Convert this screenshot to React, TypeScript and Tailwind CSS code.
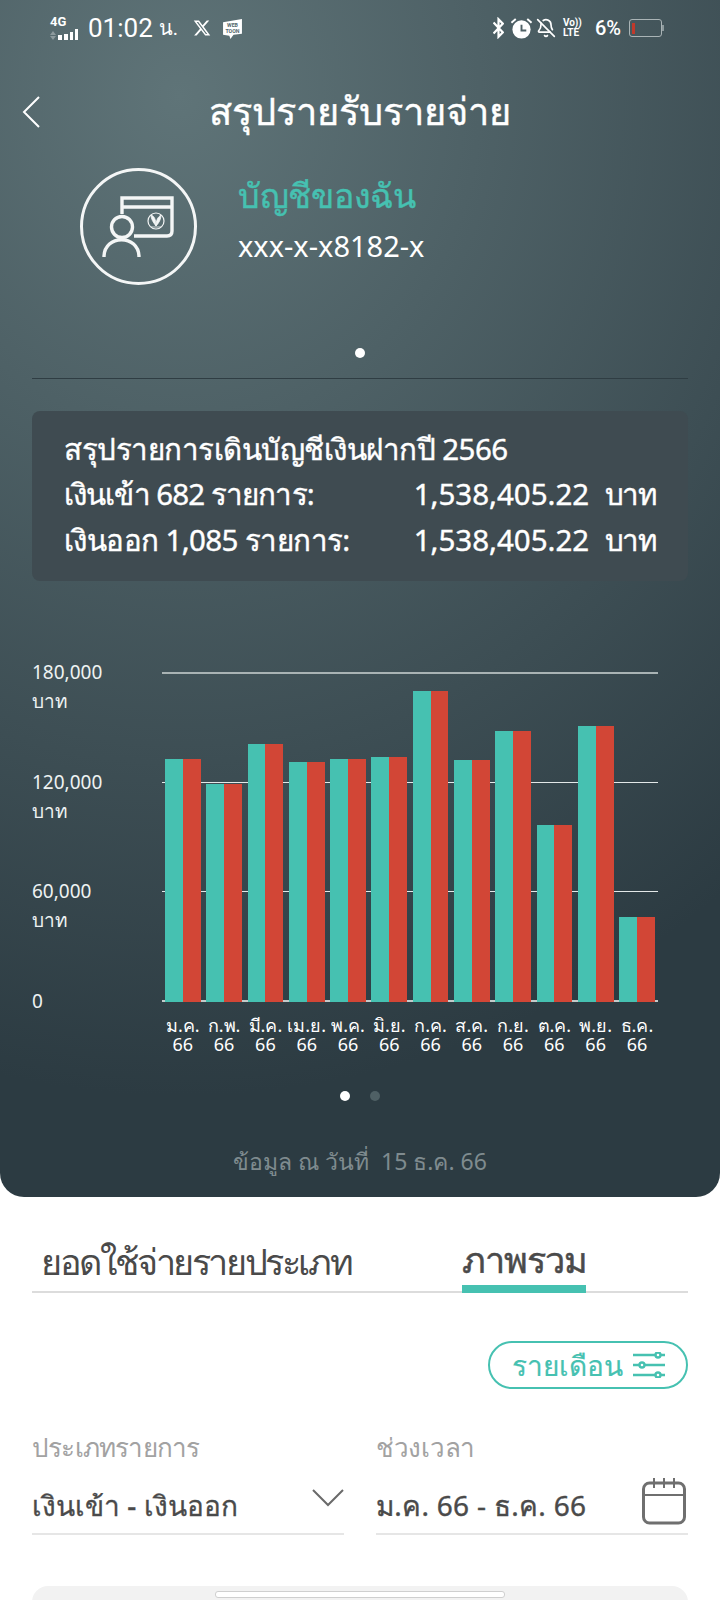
import { BellOff } from "lucide-react";
import { RiTwitterXFill } from "react-icons/ri";

const months = ["ม.ค.", "ก.พ.", "มี.ค.", "เม.ย.", "พ.ค.", "มิ.ย.", "ก.ค.", "ส.ค.", "ก.ย.", "ต.ค.", "พ.ย.", "ธ.ค."];
const bars = [243, 218, 258, 240, 243, 245, 311, 242, 271, 177, 276, 85];
const axis = ["180,000", "120,000", "60,000"];

function StatusBar() {
  return (
    <div className="flex h-[56px] items-center justify-between pl-[50px] pr-[56px] font-['Roboto',sans-serif] text-white">
      <div className="flex items-center">
        <div className="flex w-[32px] flex-col">
          <div className="flex items-start">
            <span className="text-[13px] font-bold leading-[12px]">4G</span>
          </div>
          <div className="mt-[1px] flex items-end gap-[2px]">
            <div className="mr-[1px] flex h-[9px] w-[5px] flex-col justify-between">
              <div className="h-0 w-0 border-x-[3px] border-b-[4px] border-x-transparent border-b-[#8d9a9d]" />
              <div className="h-0 w-0 border-x-[3px] border-t-[4px] border-x-transparent border-t-[#8d9a9d]" />
            </div>
            <div className="h-[5px] w-[4px] bg-white" />
            <div className="h-[6px] w-[4px] bg-white" />
            <div className="h-[8px] w-[3px] bg-white" />
            <div className="h-[11px] w-[3px] bg-white" />
          </div>
        </div>
        <span className="ml-[6px] text-[26px] font-normal leading-none">01:02</span>
        <span className="ml-[6px] text-[20px] font-normal leading-none">น.</span>
        <RiTwitterXFill className="ml-[14px] h-[20px] w-[20px]" />
        <svg viewBox="0 0 20 20" className="ml-[10px] h-[21px] w-[21px]">
          <path d="M1 4 L19 1 V15 L11 16 L8 20 L7 17 L1 16 Z" fill="#fff" />
          <text x="10" y="9" fontSize="5" fontWeight="700" textAnchor="middle" fill="#55686d">WEB</text>
          <text x="10" y="14" fontSize="5" fontWeight="700" textAnchor="middle" fill="#55686d">TOON</text>
        </svg>
      </div>
      <div className="flex items-center">
        <svg viewBox="0 0 10 20" fill="none" stroke="#fff" strokeWidth="2" className="h-[22px] w-[11px]">
          <path d="M0.5 5 9 14 5 18V2L9 6 0.5 15" />
        </svg>
        <svg viewBox="0 0 24 24" className="ml-[6px] h-[23px] w-[23px]">
          <circle cx="12" cy="13" r="9.5" fill="#fff" />
          <path d="M12 8v6h5" fill="none" stroke="#4f6166" strokeWidth="2" />
          <path d="M1.5 6 6 2M22.5 6 18 2" stroke="#fff" strokeWidth="2" />
        </svg>
        <BellOff className="ml-[3px] h-[20px] w-[20px]" strokeWidth={2} />
        <div className="ml-[7px] flex w-[20px] flex-col text-[10px] font-bold leading-[10px]">
          <span>Vo))</span>
          <span>LTE</span>
        </div>
        <span className="ml-[12px] text-[20px] font-medium leading-none">6%</span>
        <div className="ml-[8px] flex items-center">
          <div className="flex h-[18px] w-[33px] items-center rounded-[3px] border border-[#aab4b6] px-[2px]">
            <div className="h-[11px] w-[3px] bg-[#c0392b]" />
          </div>
          <div className="h-[6px] w-[2px] bg-[#8d9a9d]" />
        </div>
      </div>
    </div>
  );
}

function AccountIcon() {
  return (
    <svg viewBox="0 0 117 117" fill="none" stroke="#f4f6f6" className="h-[117px] w-[117px] shrink-0">
      <circle cx="58.5" cy="58.5" r="57" strokeWidth="3" />
      <path d="M42 46V30H92V63Q92 68 87 68H54M42 39H92" strokeWidth="3.4" />
      <circle cx="42" cy="59" r="10.5" strokeWidth="3.4" />
      <path d="M24 89C24 66 59 66 59 89" strokeWidth="3.4" />
      <circle cx="76" cy="53" r="8" strokeWidth="1.2" />
      <path d="M76 58C73 54 71 51 71 47C74 48 76 51 76 58C76 52 78 49 81 47C81 51 79 55 76 58ZM71 59H81" fill="#f4f6f6" strokeWidth="0.8" />
    </svg>
  );
}

function Chart() {
  return (
    <div className="mt-[91px] flex pl-[32px] pr-[30px]">
      <div className="mt-[-14px] w-[130px] text-[19px] text-[#eef2f2]">
        {axis.map((v) => (
          <div key={v} className="h-[109.5px] leading-[29px]">
            <div>{v}</div>
            <div>บาท</div>
          </div>
        ))}
        <div className="leading-[29px]">0</div>
      </div>
      <div className="w-[496px]">
        <div className="relative h-[330px]">
          <div className="absolute inset-0 flex flex-col justify-between">
            <div className="h-[2px] bg-[#a9b3b4]" />
            <div className="h-[1px] bg-[#e3e8e8]" />
            <div className="h-[1px] bg-[#e3e8e8]" />
            <div className="h-[2px] bg-[#c3caca]" />
          </div>
          <div className="absolute inset-0 flex items-end gap-[5.6px] pl-[3px]">
            {bars.map((h, i) => (
              <div key={i} className="flex w-[35.7px]">
                <div className="flex-1 bg-[#46c1b1]" style={{ height: h }} />
                <div className="flex-1 bg-[#d24636]" style={{ height: h }} />
              </div>
            ))}
          </div>
        </div>
        <div className="mt-[14px] flex gap-[5.6px] pl-[3px] text-center text-[18px] leading-[19px] text-white">
          {months.map((m) => (
            <div key={m} className="flex w-[35.7px] flex-col items-center whitespace-nowrap">
              <span>{m}</span>
              <span>66</span>
            </div>
          ))}
        </div>
      </div>
    </div>
  );
}

export default function App() {
  return (
    <div className="h-[1600px] w-[720px] overflow-hidden bg-white font-['Noto_Sans','DejaVu_Sans',sans-serif]">
      {/* Top panel */}
      <div className="h-[1197px] rounded-b-[24px] bg-[radial-gradient(ellipse_900px_1000px_at_25%_8%,#5f7478,#2c3b42)] text-white">
        <StatusBar />
        <div className="relative mt-[28px] flex h-[56px] items-center justify-center text-[38px] [-webkit-text-stroke:0.4px]">
          <svg viewBox="0 0 18 32" fill="none" stroke="#fff" strokeWidth="2" className="absolute left-[22px] h-[32px] w-[18px]">
            <path d="M17 1 2 16 17 31" />
          </svg>
          <span className="pb-[4px]">สรุปรายรับรายจ่าย</span>
        </div>
        <div className="mt-[28px] flex pl-[80px]">
          <AccountIcon />
          <div className="ml-[41px] mt-[4px]">
            <div className="text-[34px] leading-[46px] tracking-[-0.3px] text-[#46c1b1] [-webkit-text-stroke:0.4px]">บัญชีของฉัน</div>
            <div className="mt-[8px] text-[29px] leading-[40px]">xxx-x-x8182-x</div>
          </div>
        </div>
        <div className="mt-[63px] flex justify-center">
          <div className="h-[10px] w-[10px] rounded-full bg-white" />
        </div>
        <div className="mx-[32px] mt-[20px] h-[1px] bg-[#2f3d43]" />
        <div className="mx-[32px] mt-[32px] flex h-[170px] flex-col justify-center rounded-[8px] bg-[#3f4b51] px-[32px] pb-[4px] text-[29.5px] leading-[45.5px] [-webkit-text-stroke:0.4px]">
          <div className="tracking-[-0.5px]">สรุปรายการเดินบัญชีเงินฝากปี 2566</div>
          <div className="flex justify-between">
            <span className="tracking-[-0.9px]">เงินเข้า 682 รายการ:</span>
            <span>
              1,538,405.22&nbsp; <span className="tracking-[-1.2px]">บาท</span>
            </span>
          </div>
          <div className="flex justify-between">
            <span className="tracking-[-0.6px]">เงินออก 1,085 รายการ:</span>
            <span>
              1,538,405.22&nbsp; <span className="tracking-[-1.2px]">บาท</span>
            </span>
          </div>
        </div>
        <Chart />
        <div className="mt-[37px] flex justify-center gap-[20px]">
          <div className="h-[10px] w-[10px] rounded-full bg-white" />
          <div className="h-[10px] w-[10px] rounded-full bg-[#4f6065]" />
        </div>
        <div className="mt-[42px] text-center text-[23px] leading-[36px] text-[#7f8b8f]">ข้อมูล ณ วันที่&nbsp; 15 ธ.ค. 66</div>
      </div>

      {/* Tabs */}
      <div className="mx-[32px] mt-[39px] flex h-[57px] items-end border-b-2 border-[#dcdcdc] text-[36px] leading-[50px] text-[#4a4a4a]">
        <div className="ml-[9px] w-[309px] whitespace-nowrap pb-[4px] tracking-[-2.4px]">ยอดใช้จ่ายรายประเภท</div>
        <div className="mb-[-2px] ml-[112px] w-[124px] whitespace-nowrap border-b-8 border-[#46c1b1] tracking-[-1px] [-webkit-text-stroke:0.5px]">ภาพรวม</div>
      </div>

      {/* Filters */}
      <div className="mx-[32px] mt-[48px] flex justify-end">
        <div className="flex h-[48px] w-[200px] items-center justify-center gap-[10px] rounded-full border-2 border-[#46c1b1] text-[28px] text-[#46c1b1] [-webkit-text-stroke:0.2px]">
          รายเดือน
          <svg viewBox="0 0 32 26" fill="none" stroke="#46c1b1" strokeWidth="2.4" className="h-[26px] w-[32px]">
            <path d="M0 3H22M28 3H32M0 13H6M12 13H32M0 23H22M28 23H32" />
            <circle cx="25" cy="3" r="2.5" />
            <circle cx="9" cy="13" r="2.5" />
            <circle cx="25" cy="23" r="2.5" />
          </svg>
        </div>
      </div>
      <div className="mx-[32px] mt-[38px] grid grid-cols-2 gap-[32px]">
        <div>
          <div className="text-[26px] leading-[40px] tracking-[-0.8px] text-[#a2a2a2]">ประเภทรายการ</div>
          <div className="mt-[18px] flex h-[50px] items-center justify-between border-b-2 border-[#e6e6e6] pb-[8px] text-[28px] font-medium text-[#4a4a4a] [-webkit-text-stroke:0.3px]">
            เงินเข้า - เงินออก
            <svg viewBox="0 0 32 18" fill="none" stroke="#6a6a6a" strokeWidth="2" className="mb-[14px] h-[18px] w-[32px]">
              <path d="M1 1 16 16 31 1" />
            </svg>
          </div>
        </div>
        <div>
          <div className="text-[26px] leading-[40px] tracking-[-0.3px] text-[#a2a2a2]">ช่วงเวลา</div>
          <div className="mt-[18px] flex h-[50px] items-center justify-between border-b-2 border-[#e6e6e6] pb-[8px] text-[28px] tracking-[0.3px] text-[#4a4a4a] [-webkit-text-stroke:0.4px]">
            ม.ค. 66 - ธ.ค. 66
            <svg viewBox="0 0 44 48" fill="none" stroke="#6f6f6f" strokeWidth="3" className="mb-[8px] mr-[2px] h-[48px] w-[44px]">
              <rect x="1.5" y="6" width="41" height="40" rx="6" />
              <path d="M1.5 18H42.5M12 1V11M22 1V11M32 1V11" strokeWidth="2" />
            </svg>
          </div>
        </div>
      </div>

      {/* Next card peeking in */}
      <div className="relative mx-[32px] mt-[51px] h-[40px] rounded-t-[16px] bg-[#f2f2f2]">
        <div className="absolute left-[183px] top-[5px] h-[7px] w-[290px] rounded-[3px] border border-[#cfcfcf] bg-white" />
      </div>
    </div>
  );
}
